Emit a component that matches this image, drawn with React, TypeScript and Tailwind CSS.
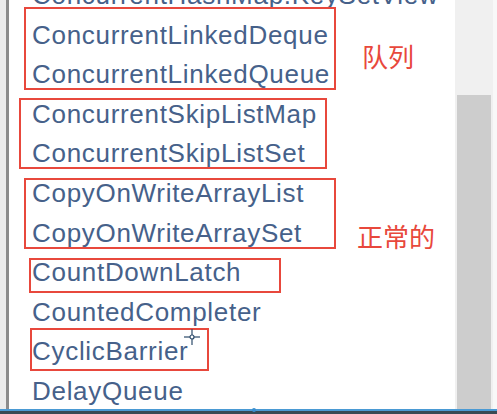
import React from 'react';

const rows = [
  'ConcurrentHashMap.KeySetView',
  'ConcurrentLinkedDeque',
  'ConcurrentLinkedQueue',
  'ConcurrentSkipListMap',
  'ConcurrentSkipListSet',
  'CopyOnWriteArrayList',
  'CopyOnWriteArraySet',
  'CountDownLatch',
  'CountedCompleter',
  'CyclicBarrier',
  'DelayQueue',
];

const App: React.FC = () => {
  return (
    <div className="relative w-[497px] h-[414px] overflow-hidden bg-white flex flex-col">
      <div className="flex flex-1 min-h-0">
        <div className="w-[6px] bg-[#ececec]" />
        <div className="w-[3px] bg-[#8c8c8c]" />
        <div className="flex-1 overflow-hidden pl-[23px]">
          <ul className="-mt-[24px]">
            {rows.map(r => (
              <li
                key={r}
                className="h-[39.6px] leading-[39.6px] text-[26px] tracking-[0.7px] text-[#46618a] whitespace-nowrap"
                style={{ fontFamily: '"Liberation Sans", Arial, sans-serif' }}
              >
                {r}
              </li>
            ))}
          </ul>
        </div>
        <div className="w-[38px] bg-[#f0f0f0] flex flex-col pt-[95px] px-[2px]">
          <div className="flex-1 bg-[#cdcdcd]" />
        </div>
        <div className="w-[4px] bg-[#f8f8f8]" />
      </div>
      <div className="h-[2px] bg-[#4a9ad4]" />
      <div className="h-[3px] bg-[#394a54]" />

      {/* annotations */}
      <div className="absolute left-[24px] top-[7px] w-[312px] h-[83px] border-2 border-[#e8483c]" />
      <div className="absolute left-[19px] top-[98px] w-[308px] h-[71px] border-2 border-[#e8483c]" />
      <div className="absolute left-[24px] top-[178px] w-[312px] h-[71px] border-2 border-[#e8483c]" />
      <div className="absolute left-[29px] top-[258px] w-[252px] h-[35px] border-2 border-[#e8483c]" />
      <div className="absolute left-[30px] top-[328px] w-[179px] h-[43px] border-2 border-[#e8483c]" />

      <span
        className="absolute left-[362px] top-[43px] text-[26px] leading-none text-[#e8483c]"
        style={{ fontFamily: '"Noto Sans CJK SC", sans-serif' }}
      >
        队列
      </span>
      <span
        className="absolute left-[357px] top-[223px] text-[26px] leading-none text-[#e8483c]"
        style={{ fontFamily: '"Noto Sans CJK SC", sans-serif' }}
      >
        正常的
      </span>

      {/* cursor */}
      <svg className="absolute left-[184px] top-[329px]" width="16" height="16" viewBox="0 0 16 16">
        <line x1="8" y1="0" x2="8" y2="6" stroke="#2c4a6a" strokeWidth="1.2" />
        <line x1="8" y1="10" x2="8" y2="16" stroke="#2c4a6a" strokeWidth="1.2" />
        <line x1="0" y1="8" x2="6" y2="8" stroke="#2c4a6a" strokeWidth="1.2" />
        <line x1="10" y1="8" x2="16" y2="8" stroke="#2c4a6a" strokeWidth="1.2" />
        <circle cx="8" cy="8" r="2" fill="none" stroke="#2c4a6a" strokeWidth="1.2" />
      </svg>
      <div className="absolute left-[252px] top-[408px] w-[4px] h-[4px] rounded-full bg-[#3a8fd0]" />
    </div>
  );
};

export default App;
